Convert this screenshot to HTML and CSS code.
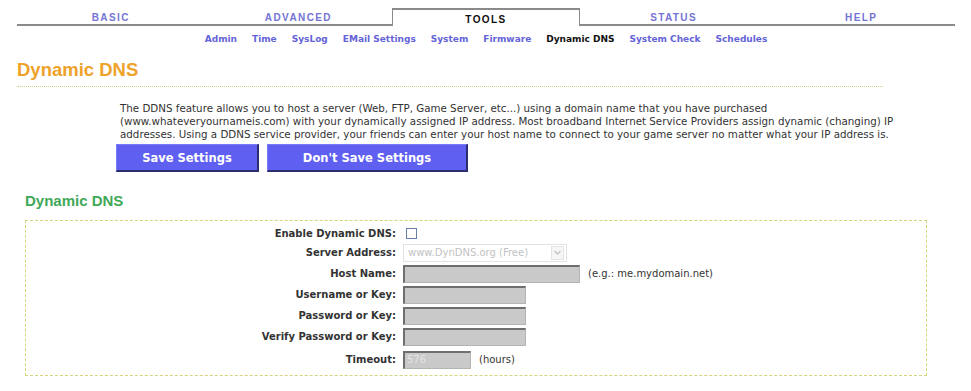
FILE: index.html
```
<!DOCTYPE html>
<html lang="en">
<head>
    <meta charset="UTF-8">
    <title>Dynamic DNS</title>
    <link rel="stylesheet" href="styles.css">
</head>
<body>
    <div class="page">
        <div class="tabs">
            <div class="tab">BASIC</div>
            <div class="tab">ADVANCED</div>
            <div class="tab active">TOOLS</div>
            <div class="tab">STATUS</div>
            <div class="tab">HELP</div>
        </div>

        <div class="subnav">
            <a href="#">Admin</a>
            <a href="#">Time</a>
            <a href="#">SysLog</a>
            <a href="#">EMail Settings</a>
            <a href="#">System</a>
            <a href="#">Firmware</a>
            <a href="#" class="current">Dynamic DNS</a>
            <a href="#">System Check</a>
            <a href="#">Schedules</a>
        </div>

        <h1 class="page-title">Dynamic DNS</h1>

        <div class="intro">
            <p>The DDNS feature allows you to host a server (Web, FTP, Game Server, etc...) using a domain name that you have purchased<br>
            (www.whateveryournameis.com) with your dynamically assigned IP address. Most broadband Internet Service Providers assign dynamic (changing) IP<br>
            addresses. Using a DDNS service provider, your friends can enter your host name to connect to your game server no matter what your IP address is.</p>
            <div class="actions">
                <button class="btn save">Save Settings</button>
                <button class="btn nosave">Don't Save Settings</button>
            </div>
        </div>

        <h2 class="section-title">Dynamic DNS</h2>

        <div class="box">
            <div class="row first">
                <label>Enable Dynamic DNS:</label>
                <div class="field"><span class="checkbox"></span></div>
            </div>
            <div class="row">
                <label>Server Address:</label>
                <div class="field">
                    <div class="select">
                        <span>www.DynDNS.org (Free)</span>
                        <span class="arrow">
                            <svg width="7" height="5" viewBox="0 0 7 5"><path d="M0.5 1 L3.5 4 L6.5 1" fill="none" stroke="#c4c4c4" stroke-width="1.4"/></svg>
                        </span>
                    </div>
                </div>
            </div>
            <div class="row">
                <label>Host Name:</label>
                <div class="field"><span class="input host"></span><span class="hint">(e.g.: me.mydomain.net)</span></div>
            </div>
            <div class="row">
                <label>Username or Key:</label>
                <div class="field"><span class="input short"></span></div>
            </div>
            <div class="row">
                <label>Password or Key:</label>
                <div class="field"><span class="input short"></span></div>
            </div>
            <div class="row">
                <label>Verify Password or Key:</label>
                <div class="field"><span class="input short"></span></div>
            </div>
            <div class="row last">
                <label>Timeout:</label>
                <div class="field"><span class="input tiny">576</span><span class="hint">(hours)</span></div>
            </div>
        </div>
    </div>
</body>
</html>
```

FILE: styles.css
```
* {
    margin: 0;
    padding: 0;
    box-sizing: border-box;
}

body {
    background: #fff;
    font-family: 'DejaVu Sans', Verdana, sans-serif;
    font-size: 10px;
    color: #333;
}

.page {
    width: 971px;
    padding-top: 8px;
}

/* top tabs */
.tabs {
    display: grid;
    grid-template-columns: repeat(5, 1fr);
    width: 938px;
    margin-left: 17px;
}

.tab {
    height: 18px;
    padding-top: 3px;
    line-height: 13px;
    text-align: center;
    font-family: 'Liberation Sans', Arial, sans-serif;
    font-weight: bold;
    font-size: 10px;
    letter-spacing: 1.4px;
    color: #7474d4;
    border-bottom: 2px solid #8a8a8a;
}

.tab.active {
    color: #111;
    border: 1px solid #8a8a8a;
    border-bottom: none;
    border-top-width: 2px;
}

.subnav {
    display: flex;
    justify-content: center;
    gap: 15px;
    margin-top: 7px;
    width: 938px;
    margin-left: 17px;
    line-height: 12px;
}

.subnav a {
    font-weight: bold;
    font-size: 9px;
    color: #6464d8;
    text-decoration: none;
}

.subnav a.current {
    color: #111;
}

.page-title {
    margin: 14px 0 0 17px;
    width: 866px;
    padding-bottom: 5px;
    font-family: 'Liberation Sans', Arial, sans-serif;
    font-size: 18.5px;
    line-height: 22px;
    color: #eea22a;
    border-bottom: 1px dotted #cfd08e;
}

.intro {
    padding-left: 120px;
    margin-top: 15px;
}

.intro p {
    font-size: 10.3px;
    line-height: 13px;
    white-space: nowrap;
}

.actions {
    display: flex;
    gap: 8px;
    margin-top: 3px;
    margin-left: -4px;
}

.btn {
    height: 28px;
    background: #5f5ff2;
    color: #fff;
    font-family: 'DejaVu Sans', Verdana, sans-serif;
    font-weight: bold;
    font-size: 11.5px;
    border: 1px solid #7a7af8;
    border-right: 2px solid #2c2c70;
    border-bottom: 2px solid #2c2c70;
}

.btn.save {
    width: 143px;
}

.btn.nosave {
    width: 201px;
}

.section-title {
    margin: 20px 0 0 25px;
    font-family: 'Liberation Sans', Arial, sans-serif;
    font-size: 15px;
    line-height: 18px;
    color: #40a858;
}

.box {
    margin: 10px 0 0 25px;
    width: 902px;
    border: 1px dashed #d4d47a;
    padding: 3px 0 5px;
}

.row {
    display: grid;
    grid-template-columns: 370px 1fr;
    column-gap: 7px;
    align-items: center;
    height: 21px;
}

.row.first {
    height: 18px;
}

.row.last {
    height: 23px;
    padding-top: 2px;
}

.row label {
    text-align: right;
    font-weight: bold;
    color: #333;
}

.field {
    display: flex;
    align-items: center;
}

.checkbox {
    width: 11px;
    height: 11px;
    margin-left: 3px;
    border: 1px solid #6a7fa8;
    background: #fff;
}

.select {
    display: flex;
    align-items: center;
    justify-content: space-between;
    width: 164px;
    height: 18px;
    border: 1px solid #e2e2e2;
    padding: 0 2px 0 4px;
    color: #c2c2c2;
}

.select .arrow {
    display: flex;
    align-items: center;
    justify-content: center;
    width: 13px;
    height: 14px;
    border: 1px solid #e4e4e4;
    background: #f6f6f6;
}

.input {
    height: 18px;
    background: #c9c9c9;
    border: 1px solid #b4b4b4;
    border-top: 2px solid #6e6e6e;
    border-left: 2px solid #6e6e6e;
    color: #e4e4e4;
    padding-left: 2px;
    line-height: 14px;
}

.input.host {
    width: 177px;
}

.input.short {
    width: 123px;
}

.input.tiny {
    width: 68px;
}

.hint {
    margin-left: 8px;
    color: #333;
}
```
